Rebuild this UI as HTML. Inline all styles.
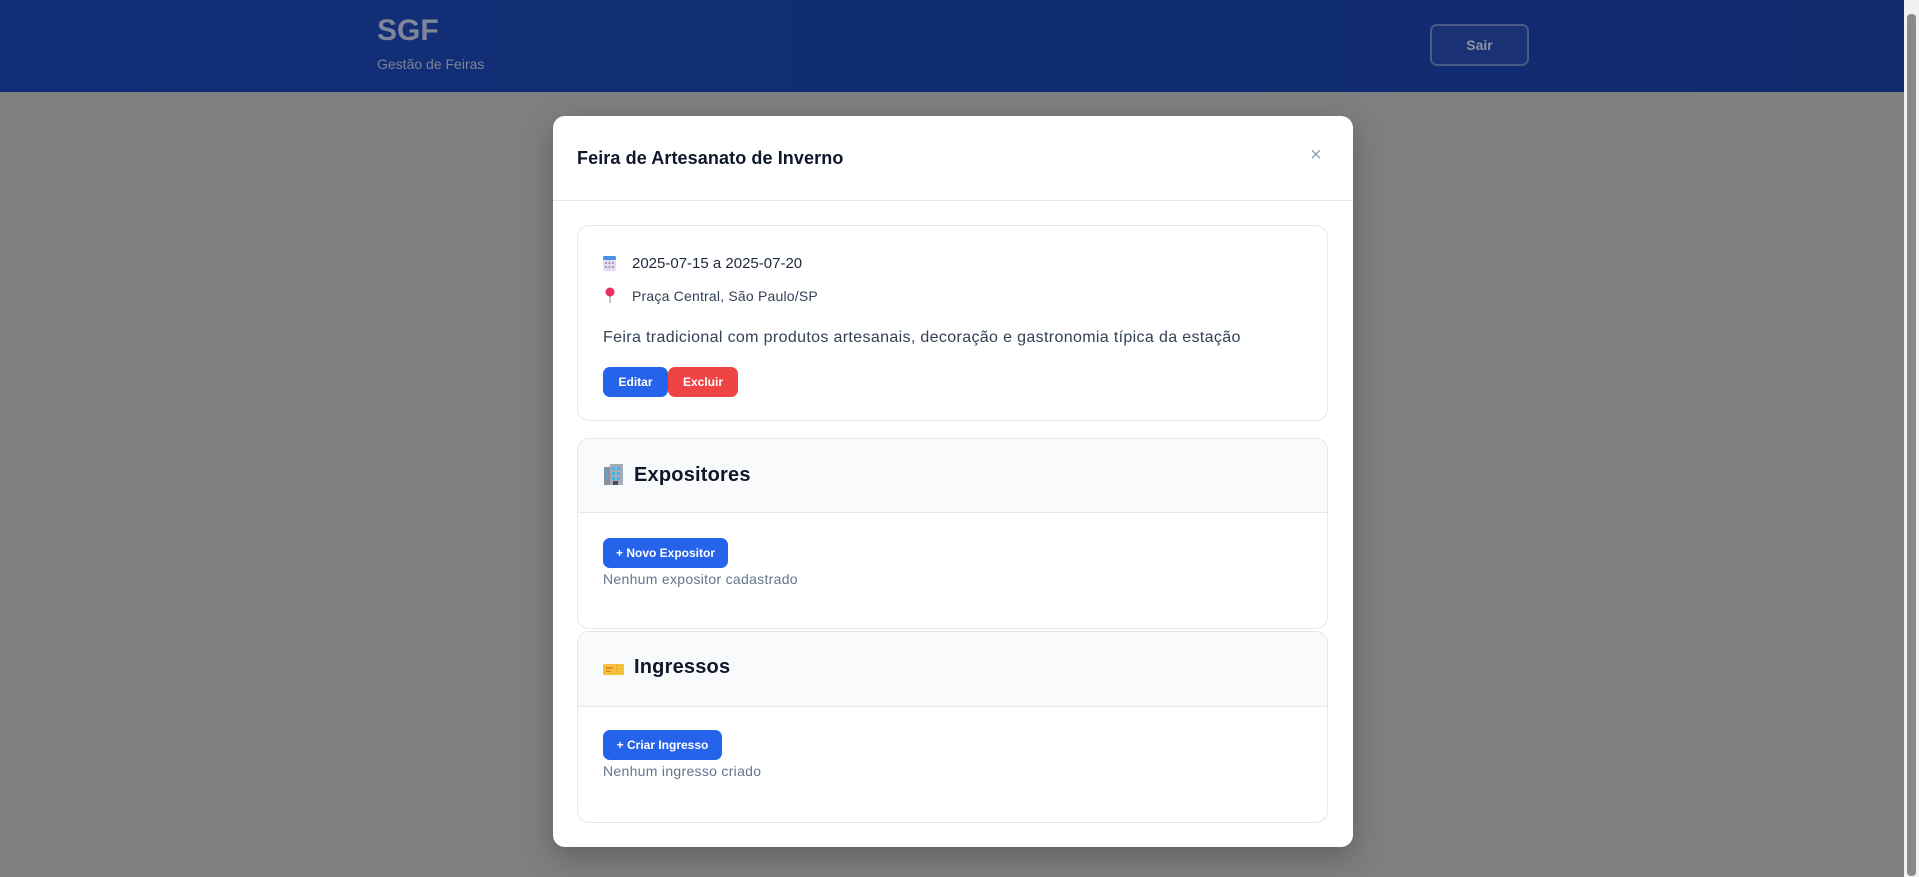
<!DOCTYPE html>
<html><head><meta charset="utf-8"><style>
*{box-sizing:border-box;margin:0;padding:0}
body{width:1919px;height:877px;overflow:hidden;background:#7f7f7f;font-family:"Liberation Sans",sans-serif;position:relative}
.hdr{position:absolute;left:0;top:0;width:1904px;height:92px;background:linear-gradient(90deg,#112f78,#102a6e)}
.sb{position:absolute;left:1904px;top:0;width:15px;height:877px;background:#f1f1f1}
.sb i{position:absolute;left:3px;top:14px;width:9px;height:862px;background:#8a8a8a;border-radius:4px}
.abs{position:absolute}
.modal{position:absolute;left:553px;top:116px;width:800px;height:731px;background:#fff;border-radius:12px;box-shadow:0 10px 30px rgba(0,0,0,.25)}
.card{position:absolute;left:24px;width:751px;border:1px solid #e2e8f0;border-radius:12px;background:#fff;overflow:hidden}
.sh{position:absolute;left:0;top:0;width:100%;background:#f8fafc;border-bottom:1px solid #e2e8f0}
.btn{position:absolute;height:30px;border-radius:7px;color:#fff;font-size:12px;font-weight:bold;display:flex;align-items:center;justify-content:center}
.blue{background:#2563eb}.red{background:#ef4444}
.t{position:absolute;white-space:nowrap}
</style></head><body>
<div class="hdr">
 <div class="t" style="left:377px;top:14px;font-size:30px;font-weight:bold;color:#80869a">SGF</div>
 <div class="t" style="left:377px;top:56px;font-size:14px;color:#7d8497">Gestão de Feiras</div>
 <div class="abs" style="left:1430px;top:24px;width:99px;height:42px;border:2px solid #4a5a86;border-radius:7px;background:#1a3273;color:#8d93a3;font-size:14px;font-weight:bold;display:flex;align-items:center;justify-content:center">Sair</div>
</div>
<div class="sb"><i></i></div>
<div class="modal">
 <div class="t" style="left:24px;top:32px;font-size:18px;font-weight:bold;color:#0f172a;letter-spacing:0.1px">Feira de Artesanato de Inverno</div>
 <div class="t" style="left:757px;top:28px;font-size:20px;color:#94a3b8">×</div>
 <div class="abs" style="left:0;top:84px;width:800px;height:1px;background:#e2e8f0"></div>

 <div class="card" style="top:109px;height:196px">
  <svg class="abs" style="left:25px;top:29px" width="13" height="16" viewBox="0 0 13 16"><rect x="0" y="1" width="13" height="15" rx="2" fill="#e6dcf2"/><rect x="0" y="1" width="13" height="4" rx="1.5" fill="#4a90e2"/><g fill="#a79bc0"><rect x="2" y="7" width="2" height="2"/><rect x="5.5" y="7" width="2" height="2"/><rect x="9" y="7" width="2" height="2"/><rect x="2" y="11" width="2" height="2"/><rect x="5.5" y="11" width="2" height="2"/><rect x="9" y="11" width="2" height="2"/></g></svg>
  <div class="t" style="left:54px;top:29px;font-size:15px;color:#1e293b">2025-07-15 a 2025-07-20</div>
  <svg class="abs" style="left:27px;top:61px" width="10" height="16" viewBox="0 0 10 16"><line x1="5" y1="7" x2="5" y2="16" stroke="#999" stroke-width="1.2"/><circle cx="5" cy="5" r="4.5" fill="#e8315b"/></svg>
  <div class="t" style="left:54px;top:62px;font-size:14px;color:#334155;letter-spacing:0.2px">Praça Central, São Paulo/SP</div>
  <div class="t" style="left:25px;top:103px;font-size:16px;color:#334155;letter-spacing:0.35px">Feira tradicional com produtos artesanais, decoração e gastronomia típica da estação</div>
  <div class="btn blue" style="left:25px;top:141px;width:65px">Editar</div>
  <div class="btn red" style="left:90px;top:141px;width:70px">Excluir</div>
 </div>

 <div class="card" style="top:322px;height:191px">
  <div class="sh" style="height:74px"></div>
  <svg class="abs" style="left:25px;top:25px" width="21" height="21" viewBox="0 0 21 21"><rect x="1" y="3" width="9" height="18" fill="#8b8f9c"/><rect x="7" y="0" width="13" height="21" fill="#a6abb8"/><g fill="#3fb4ec"><rect x="9" y="3" width="3" height="3"/><rect x="14" y="3" width="3" height="3"/><rect x="9" y="8" width="3" height="3"/><rect x="14" y="8" width="3" height="3"/><rect x="9" y="13" width="3" height="3"/><rect x="14" y="13" width="3" height="3"/><rect x="3" y="7" width="2" height="3"/><rect x="3" y="12" width="2" height="3"/></g><rect x="10" y="17" width="5" height="4" fill="#4a4d57"/></svg>
  <div class="t" style="left:56px;top:25px;font-size:20px;font-weight:bold;color:#0f172a;letter-spacing:0.2px">Expositores</div>
  <div class="btn blue" style="left:25px;top:99px;width:125px">+ Novo Expositor</div>
  <div class="t" style="left:25px;top:132px;font-size:14px;color:#64748b;letter-spacing:0.3px">Nenhum expositor cadastrado</div>
 </div>

 <div class="card" style="top:515px;height:192px">
  <div class="sh" style="height:75px"></div>
  <svg class="abs" style="left:25px;top:32px" width="21" height="11" viewBox="0 0 21 11"><rect width="21" height="11" rx="1" fill="#f5c33b"/><rect x="3" y="3" width="7" height="2" fill="#e08a2a"/><rect x="3" y="6.5" width="5" height="1.5" fill="#e08a2a"/><line x1="14" y1="1" x2="14" y2="10" stroke="#e08a2a" stroke-dasharray="1.5 1.5"/></svg>
  <div class="t" style="left:56px;top:24px;font-size:20px;font-weight:bold;color:#0f172a;letter-spacing:0.2px">Ingressos</div>
  <div class="btn blue" style="left:25px;top:98px;width:119px">+ Criar Ingresso</div>
  <div class="t" style="left:25px;top:131px;font-size:14px;color:#64748b;letter-spacing:0.3px">Nenhum ingresso criado</div>
 </div>
</div>
</body></html>
